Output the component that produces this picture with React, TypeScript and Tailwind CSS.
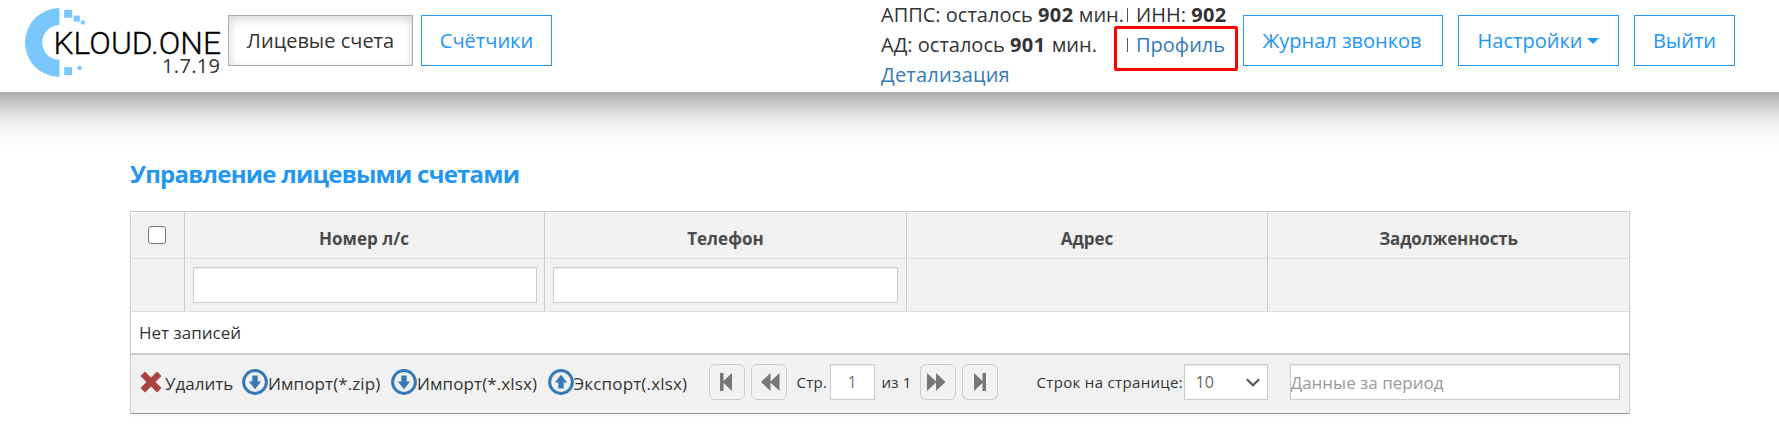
import type { ReactNode } from "react";

function Logo() {
  return (
    <svg width="222" height="92" viewBox="0 0 222 92" className="block shrink-0">
      <g fill="#7ac7ff">
        <path d="M59.5 8A34.5 34.5 0 0 0 59.5 77V59.7A17.3 17.3 0 0 1 59.5 25.1Z" />
        <rect x="64.2" y="9.8" width="8" height="8" />
        <rect x="73.8" y="15.6" width="6" height="6" />
        <rect x="81" y="20.6" width="3.8" height="3.8" />
        <rect x="64.2" y="67.2" width="8" height="8" />
        <rect x="77.5" y="66" width="3.8" height="3.8" />
      </g>
      <text x="53.5" y="53.5" textLength="167.500" lengthAdjust="spacingAndGlyphs" fontSize="32" fill="#000" stroke="#000" strokeWidth="0.3" className="font-[Roboto] font-light">
        KLOUD.ONE
      </text>
      <text x="162" y="73" textLength="58" fontSize="20" fill="#333">1.7.19</text>
    </svg>
  );
}

function NavButton({ children, className }: { children: ReactNode; className: string }) {
  return (
    <button className={`flex h-[51px] shrink-0 items-center justify-center border border-[#2196f3] bg-white pt-px text-xl whitespace-nowrap text-[#2196f3] ${className}`}>
      {children}
    </button>
  );
}

function ArrowCircle({ up = false }: { up?: boolean }) {
  return (
    <svg width="26" height="26" viewBox="0 0 26 26" className={up ? "shrink-0 rotate-180" : "shrink-0"}>
      <circle cx="13" cy="13" r="11.4" fill="none" stroke="#337ab7" strokeWidth="3" />
      <path d="M10.3 6.6h5.4v6h3.5L13 20.2 6.8 12.6h3.5z" fill="#337ab7" />
    </svg>
  );
}

function PagerButton({ d, className = "" }: { d: string; className?: string }) {
  return (
    <button className={`flex size-9 shrink-0 items-center justify-center rounded-md border border-[#ccc] ${className}`}>
      <svg width="34" height="34" viewBox="0 0 34 34">
        <path d={d} fill="#777" />
      </svg>
    </button>
  );
}

const inputClass = "h-9 border border-[#ccc] bg-white shadow-[inset_0_1px_1px_rgba(0,0,0,0.075)] outline-none";
const columns = "grid grid-cols-[54px_360px_362px_361px_361px]";

export default function App() {
  return (
    <div className="h-[430px] w-full overflow-hidden bg-white text-[#333] font-['Open_Sans','Noto_Sans',sans-serif]">
      <header className="-mx-20 flex h-[92px] bg-white px-20 shadow-[0_0_50px_rgba(0,0,0,0.66)]">
        <Logo />
        <nav className="flex gap-2 pt-[15px] pl-[6px]">
          <button className="flex h-[51px] w-[185px] items-center justify-center border border-[#adadad] bg-white pt-px text-xl shadow-[inset_0_3px_10px_rgba(0,0,0,0.18)]">
            Лицевые счета
          </button>
          <NavButton className="w-[131px]">Счётчики</NavButton>
        </nav>
        <div className="ml-[329px] w-[246px] shrink-0 text-xl/[30px] whitespace-nowrap">
          <div>АППС: осталось <b className="tracking-[0.4px]">902</b> мин.</div>
          <div>АД: осталось <b className="tracking-[0.4px]">901</b> <span className="ml-px">мин.</span></div>
          <a className="tracking-[0.2px] text-[#337ab7]">Детализация</a>
        </div>
        <div className="relative w-[116px] shrink-0 text-xl/[30px] whitespace-nowrap">
          <div className="flex items-center">
            <span className="h-[14px] w-px bg-[#555]" />
            <span className="ml-2">ИНН: <b className="tracking-[0.4px]">902</b></span>
          </div>
          <div className="flex items-center">
            <span className="h-[14px] w-px bg-[#555]" />
            <a className="ml-2 text-[#337ab7]">Профиль</a>
          </div>
          <div className="absolute top-[26px] left-[-13px] h-[45px] w-[124px] rounded-[2px] border-3 border-[#ff0000]" />
        </div>
        <div className="flex gap-[15px] pt-[15px]">
          <NavButton className="w-[200px] pr-[2px]">Журнал звонков</NavButton>
          <NavButton className="w-[161px]">
            Настройки
            <svg width="12" height="6" viewBox="0 0 12 6" className="ml-[5px]">
              <path d="M0 0h12L6 6z" fill="#2196f3" />
            </svg>
          </NavButton>
          <NavButton className="w-[101px]">Выйти</NavButton>
        </div>
      </header>

      <main className="pt-[65px] pl-[130px]">
        <h1 className="text-2xl/[33px] font-bold tracking-[-0.76px] text-[#2196f3]">
          Управление лицевыми счетами
        </h1>
        <section className="mt-[21px] w-[1500px] border border-[#ccc] border-b-[#999] shadow-[0_1px_3px_rgba(0,0,0,0.08)]">
          <div className="overflow-hidden rounded-tl-lg rounded-r-[5px] bg-[#f1f1f1] text-[17px] text-[#4b4b4b]">
            <div className={`${columns} h-[47px] divide-x divide-[#ccc] border-b border-[#ddd] font-bold`}>
              <div className="flex justify-center pt-[14px] pr-px">
                <input type="checkbox" className="size-[18px] appearance-none rounded-[3px] border border-[#767676] bg-white" />
              </div>
              <div className="pt-[13px] pr-px text-center leading-7">Номер л/с</div>
              <div className="pt-[13px] text-center leading-7">Телефон</div>
              <div className="pt-[13px] text-center leading-7">Адрес</div>
              <div className="pt-[13px] text-center leading-7 tracking-[-0.15px]">Задолженность</div>
            </div>
            <div className={`${columns} h-[52px] divide-x divide-[#ccc]`}>
              <div />
              <div className="pt-2 pr-[7px] pl-2"><input className={`${inputClass} w-full`} /></div>
              <div className="px-2 pt-2"><input className={`${inputClass} w-full`} /></div>
              <div />
              <div />
            </div>
          </div>
          <div className="h-[42px] border-t border-[#ddd] bg-white pl-2 text-[17px] leading-[42px]">Нет записей</div>
          <div className="flex h-[60px] items-start border-t-2 border-[#ccc] bg-[#f1f1f1] pt-[9px] pl-[9px] text-[15px] leading-9 whitespace-nowrap">
            <div className="flex h-9 items-center text-[17px]">
              <svg width="22" height="22" viewBox="0 0 22 22" className="mr-[3px]">
                <path d="M5 0.5L11 6.5 17 0.5 21.5 5 15.5 11 21.5 17 17 21.5 11 15.5 5 21.5 0.5 17 6.5 11 0.5 5z" fill="#a94442" />
              </svg>
              <span className="w-[77px] pt-[3px]">Удалить</span>
              <ArrowCircle />
              <span className="w-[123px] pt-[3px] tracking-[0.1px]">Импорт(*.zip)</span>
              <ArrowCircle />
              <span className="w-[130.5px] pt-[3px] tracking-[0.1px]">Импорт(*.xlsx)</span>
              <ArrowCircle up />
              <span className="w-[135px] pt-[3px] tracking-[0.15px]">Экспорт(.xlsx)</span>
            </div>
            <PagerButton d="M10 8h3.5v8L22 8v18L13.500 18v8H10z" />
            <PagerButton className="ml-[6px]" d="M9 17L18.500 8v8.500L27.500 8v18L18.500 17.500V26z" />
            <span className="ml-[10px] w-[33px] tracking-[0.3px]">Стр.</span>
            <input defaultValue="1" className={`${inputClass} w-[45px] text-center text-base text-[#777]`} />
            <span className="ml-[7px] w-[38px] tracking-[0.2px]">из 1</span>
            <PagerButton d="M6 8L15 16.500V8L24.500 17 15 26V17.500L6 26z" />
            <PagerButton className="ml-[6px]" d="M11 8L19.500 16V8H23V26H19.500V18L11 26z" />
            <span className="ml-[39px] w-[147px] tracking-[0.33px]">Строк на странице:</span>
            <div className={`${inputClass} flex w-[84px] items-center justify-between pr-[7px] pl-[11px] text-base text-[#666]`}>
              10
              <svg width="14" height="9" viewBox="0 0 14 9" fill="none" stroke="#555" strokeWidth="2.2">
                <path d="M0.800 1.300L7 7.300 13.200 1.300" />
              </svg>
            </div>
            <input placeholder="Данные за период" className={`${inputClass} ml-[22px] w-[330px] pt-[2px] text-[17px] placeholder:text-[#999]`} />
          </div>
        </section>
      </main>
    </div>
  );
}
